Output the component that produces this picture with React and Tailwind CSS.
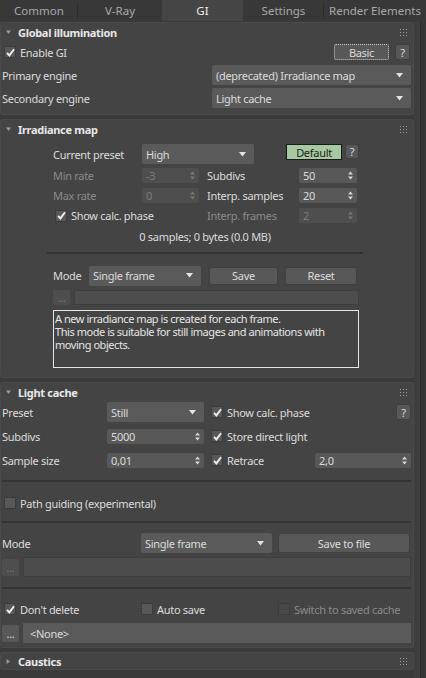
import React from "react";

const Arrow = () => (
  <svg width="7" height="5" viewBox="0 0 7 5" className="shrink-0">
    <path d="M0 0 H7 L3.5 4.5 Z" fill="#e4e4e4" />
  </svg>
);

const SpinArrows = ({ disabled }) => (
  <svg width="5" height="9" viewBox="0 0 5 9" className="shrink-0">
    <path d="M0 3.5 L2.5 0.5 L5 3.5 Z" fill={disabled ? "#777" : "#d6d6d6"} />
    <path d="M0 5.5 L2.5 8.5 L5 5.5 Z" fill={disabled ? "#777" : "#d6d6d6"} />
  </svg>
);

const GripDots = ({ top }) => (
  <svg width="7" height="7" viewBox="0 0 7 7" className={"absolute right-[7px] " + top}>
    {[0, 3, 6].map((y) =>
      [0, 3, 6].map((x) => <rect key={x + "-" + y} x={x} y={y} width="1" height="1" fill="#9c9c9c" />)
    )}
  </svg>
);

const Check = ({ checked, disabled }) => (
  <span
    className={
      "w-[12px] h-[12px] shrink-0 flex items-center justify-center border " +
      (disabled ? "bg-[#484848] border-[#3c3c3c]" : "bg-[#585858] border-[#3c3c3c]")
    }
  >
    {checked && (
      <svg width="9" height="9" viewBox="0 0 9 9">
        <path d="M1 4.8 L3.4 7.4 L8 1.2" stroke="#eeeeee" strokeWidth="1.9" fill="none" />
      </svg>
    )}
  </span>
);

const CheckLabel = ({ checked, disabled, label, className = "" }) => (
  <div className={"flex items-center gap-[4px] " + className}>
    <Check checked={checked} disabled={disabled} />
    <span className={disabled ? "text-[#8a8a8a]" : ""}>{label}</span>
  </div>
);

const Dropdown = ({ value, className = "" }) => (
  <div
    className={
      "h-[20px] bg-[#5a5a5a] rounded-[2px] flex items-center justify-between pl-[4px] pr-[8px] " + className
    }
  >
    <span>{value}</span>
    <Arrow />
  </div>
);

const Spinner = ({ value, disabled, className = "" }) => (
  <div
    className={
      "h-[15px] rounded-[2px] flex items-center justify-between pl-[4px] pr-[4px] " +
      (disabled ? "bg-[#4e4e4e] text-[#7c7c7c] " : "bg-[#585858] ") +
      className
    }
  >
    <span>{value}</span>
    <SpinArrows disabled={disabled} />
  </div>
);

const Button = ({ label, className = "" }) => (
  <div
    className={
      "bg-[#585858] border border-[#404040] rounded-[3px] flex items-center justify-center " + className
    }
  >
    {label}
  </div>
);

const Header = ({ title }) => (
  <div className="h-[20px] flex items-center relative">
    <svg width="5" height="5" viewBox="0 0 5 5" className="ml-[6px] mr-[7px]">
      <path d="M0 0.5 H5 L2.5 4 Z" fill="#9a9a9a" />
    </svg>
    <span className="font-bold text-[#e8e8e8]">{title}</span>
    <GripDots top="top-[7px]" />
  </div>
);

const Panel = ({ children, className = "" }) => (
  <div className={"bg-[#444444] rounded-[3px] shadow-[inset_0_0_0_1px_#4a4a4a] " + className}>{children}</div>
);

const Sep = ({ className = "" }) => <div className={"h-[2px] bg-[#343434] " + className} />;

export default function App() {
  const tabs = [
    { name: "Common", w: "w-[78px]" },
    { name: "V-Ray", w: "w-[84px]" },
    { name: "GI", w: "w-[81px]", sel: true },
    { name: "Settings", w: "w-[81px]" },
    { name: "Render Elements", w: "w-[102px]" },
  ];
  return (
    <div className="w-[426px] h-[678px] bg-[#3a3a3a] overflow-hidden flex flex-col font-['Noto_Sans',sans-serif] text-[11px] tracking-[-0.3px] leading-none text-[#dcdcdc]">
      {/* Tabs */}
      <div className="h-[21px] flex bg-[#383838] shrink-0">
        {tabs.map((t, i) => (
          <div
            key={t.name}
            className={
              t.w +
              " h-full flex items-center justify-center relative text-[11.5px] tracking-normal " +
              (t.sel ? "bg-[#454545] text-[#eeeeee]" : "text-[#a8a8a8]")
            }
          >
            {t.name}
            {(i === 0 || i === 3) && <span className="absolute right-0 top-[3px] h-[15px] w-[1px] bg-[#2c2c2c]" />}
          </div>
        ))}
      </div>

      <div className="flex flex-1 min-h-0">
        <div className="w-[414px] flex flex-col gap-[4px] pt-[1px] shrink-0">
          {/* Global illumination */}
          <Panel>
            <Header title="Global illumination" />
            <div className="h-[16px] mt-[2px] flex items-center pr-[4px]">
              <CheckLabel checked label="Enable GI" className="ml-[4px]" />
              <div className="flex-1" />
              <div className="w-[55px] h-[16px] bg-[#585858] rounded-[2px] border border-dotted border-[#c8c8c8] flex items-center justify-center">
                Basic
              </div>
              <Button label="?" className="w-[15px] h-[16px] ml-[6px]" />
            </div>
            <div className="h-[20px] mt-[5px] flex items-center pl-[2px] pr-[3px]">
              <span className="flex-1">Primary engine</span>
              <Dropdown value="(deprecated) Irradiance map" className="w-[199px]" />
            </div>
            <div className="h-[20px] mt-[3px] mb-[7px] flex items-center pl-[2px] pr-[3px]">
              <span className="flex-1">Secondary engine</span>
              <Dropdown value="Light cache" className="w-[199px]" />
            </div>
          </Panel>

          {/* Irradiance map */}
          <Panel>
            <Header title="Irradiance map" />
            <div className="ml-[47px] w-[316px]">
              <div className="pl-[6px] pr-[4px]">
                <div className="h-[20px] mt-[5px] flex items-center">
                  <span className="w-[89px]">Current preset</span>
                  <Dropdown value="High" className="w-[112px]" />
                  <div className="flex-1" />
                  <div className="w-[56px] h-[16px] self-start bg-[#a6c9a1] border border-[#1a1a1a] text-[#1c1c1c] flex items-center justify-center">
                    Default
                  </div>
                  <Button label="?" className="w-[14px] h-[15px] ml-[3px] self-start" />
                </div>
                <div className="h-[15px] mt-[4px] flex items-center">
                  <span className="w-[89px] text-[#8a8a8a]">Min rate</span>
                  <Spinner value="-3" disabled className="w-[57px]" />
                  <span className="w-[100px] pl-[8px]">Subdivs</span>
                  <Spinner value="50" className="w-[58px]" />
                </div>
                <div className="h-[15px] mt-[5px] flex items-center">
                  <span className="w-[89px] text-[#8a8a8a]">Max rate</span>
                  <Spinner value="0" disabled className="w-[57px]" />
                  <span className="w-[100px] pl-[8px]">Interp. samples</span>
                  <Spinner value="20" className="w-[58px]" />
                </div>
                <div className="h-[15px] mt-[5px] flex items-center">
                  <div className="w-[146px]">
                    <CheckLabel checked label="Show calc. phase" className="ml-[2px]" />
                  </div>
                  <span className="w-[100px] pl-[8px] text-[#8a8a8a]">Interp. frames</span>
                  <Spinner value="2" disabled className="w-[58px]" />
                </div>
              </div>
              <div className="h-[15px] mt-[6px] flex items-center justify-center">0 samples; 0 bytes (0.0 MB)</div>
              <Sep className="mt-[8px]" />
              <div className="pl-[6px] pr-[4px]">
                <div className="h-[19px] mt-[12px] flex items-center">
                  <span className="w-[36px]">Mode</span>
                  <Dropdown value="Single frame" className="w-[112px] h-[19px]" />
                  <Button label="Save" className="w-[69px] h-[18px] ml-[8px]" />
                  <Button label="Reset" className="w-[72px] h-[18px] ml-[7px]" />
                </div>
                <div className="h-[15px] mt-[5px] flex items-center">
                  <div className="w-[17px] h-[15px] bg-[#4e4e4e] rounded-[2px] text-[#7a7a7a] flex items-center justify-center">
                    ...
                  </div>
                  <div className="flex-1 h-[15px] ml-[4px] bg-[#4d4d4d] border border-[#3e3e3e]" />
                </div>
                <div className="h-[58px] mt-[5px] border border-[#e6e6e6] px-[1px] pt-[1px] leading-[13px] tracking-[-0.45px] text-[#e4e4e4]">
                  <div>A new irradiance map is created for each frame.</div>
                  <div>This mode is suitable for still images and animations with</div>
                  <div>moving objects.</div>
                </div>
              </div>
            </div>
            <div className="h-[10px]" />
          </Panel>

          {/* Light cache */}
          <Panel>
            <Header title="Light cache" />
            <div className="pl-[2px] pr-[3px]">
              <div className="flex flex-col gap-[4px]">
                <div className="h-[20px] flex items-center">
                  <span className="w-[105px]">Preset</span>
                  <Dropdown value="Still" className="w-[97px]" />
                  <CheckLabel checked label="Show calc. phase" className="ml-[7px]" />
                  <div className="flex-1" />
                  <Button label="?" className="w-[15px] h-[16px]" />
                </div>
                <div className="h-[20px] flex items-center">
                  <span className="w-[105px]">Subdivs</span>
                  <Spinner value="5000" className="w-[97px]" />
                  <CheckLabel checked label="Store direct light" className="ml-[7px]" />
                </div>
                <div className="h-[20px] flex items-center">
                  <span className="w-[105px]">Sample size</span>
                  <Spinner value="0,01" className="w-[97px]" />
                  <CheckLabel checked label="Retrace" className="ml-[7px]" />
                  <div className="flex-1" />
                  <Spinner value="2,0" className="w-[96px]" />
                </div>
              </div>
              <Sep className="mt-[10px]" />
              <div className="h-[16px] mt-[13px] flex items-center">
                <CheckLabel label="Path guiding (experimental)" className="ml-[2px]" />
              </div>
              <Sep className="mt-[10px]" />
              <div className="h-[20px] mt-[10px] flex items-center">
                <span className="w-[139px]">Mode</span>
                <Dropdown value="Single frame" className="w-[131px]" />
                <Button label="Save to file" className="w-[132px] h-[20px] ml-[6px]" />
              </div>
              <div className="h-[20px] mt-[4px] flex items-center">
                <div className="w-[17px] h-[17px] bg-[#4e4e4e] rounded-[2px] text-[#7a7a7a] flex items-center justify-center">
                  ...
                </div>
                <div className="flex-1 h-[20px] ml-[4px] bg-[#4c4c4c] border border-[#3e3e3e]" />
              </div>
              <Sep className="mt-[10px]" />
              <div className="h-[16px] mt-[12px] flex items-center">
                <div className="w-[137px] ml-[2px]">
                  <CheckLabel checked label="Don't delete" />
                </div>
                <div className="w-[137px]">
                  <CheckLabel label="Auto save" />
                </div>
                <CheckLabel disabled label="Switch to saved cache" />
              </div>
              <div className="h-[20px] mt-[6px] mb-[5px] flex items-center">
                <div className="w-[17px] h-[17px] bg-[#585858] rounded-[2px] flex items-center justify-center">...</div>
                <div className="flex-1 h-[20px] ml-[4px] bg-[#5a5a5a] flex items-center pl-[7px]">&lt;None&gt;</div>
              </div>
            </div>
          </Panel>

          {/* Caustics */}
          <Panel>
            <div className="h-[18px] flex items-center relative">
              <svg width="5" height="5" viewBox="0 0 5 5" className="ml-[6px] mr-[7px]">
                <path d="M0.5 0 V5 L4 2.5 Z" fill="#9a9a9a" />
              </svg>
              <span className="font-bold text-[#e8e8e8]">Caustics</span>
              <GripDots top="top-[6px]" />
            </div>
          </Panel>
        </div>

        {/* scrollbar gutter */}
        <div className="flex-1 flex">
          <div className="w-[6px] bg-[#3e3e3e]" />
          <div className="flex-1 bg-[#373737] border-l border-[#2f2f2f]" />
        </div>
      </div>
    </div>
  );
}
